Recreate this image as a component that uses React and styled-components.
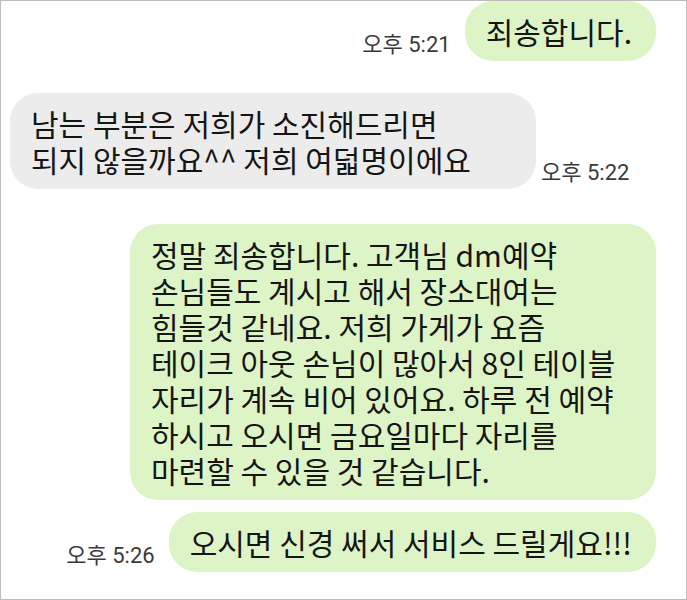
import React from "react";
import styled, { createGlobalStyle } from "styled-components";

const messages = [
  { mine: true, time: "오후 5:21", space: 0, lines: ["죄송합니다."] },
  {
    mine: false,
    time: "오후 5:22",
    space: 32,
    lines: ["남는 부분은 저희가 소진해드리면", "되지 않을까요^^ 저희 여덟명이에요"],
  },
  {
    mine: true,
    time: null,
    space: 35,
    lines: [
      "정말 죄송합니다. 고객님 dm예약",
      "손님들도 계시고 해서 장소대여는",
      "힘들것 같네요. 저희 가게가 요즘",
      "테이크 아웃 손님이 많아서 8인 테이블",
      "자리가 계속 비어 있어요. 하루 전 예약",
      "하시고 오시면 금요일마다 자리를",
      "마련할 수 있을 것 같습니다.",
    ],
  },
  { mine: true, time: "오후 5:26", space: 12, lines: ["오시면 신경 써서 서비스 드릴게요!!!"] },
];

const GlobalStyle = createGlobalStyle`
  html, body {
    margin: 0;
    padding: 0;
    background: #fff;
  }
`;

const Chat = styled.div`
  width: 687px;
  height: 600px;
  box-sizing: border-box;
  border: 1px solid #bdbdbd;
  padding: 0 30px 0 9px;
  background: #fff;
  overflow: hidden;
  display: flex;
  flex-direction: column;
  font-family: "Noto Sans CJK KR", "Noto Sans", sans-serif;
`;

const Row = styled.div`
  display: flex;
  align-items: flex-end;
  justify-content: ${(p) => (p.$mine ? "flex-end" : "flex-start")};
  gap: ${(p) => (p.$mine ? "14px" : "5px")};
  margin-top: ${(p) => p.$space}px;
`;

const Bubble = styled.div`
  box-sizing: border-box;
  width: ${(p) => (p.$multi ? "526px" : "auto")};
  padding: 12px 24px 12px 21px;
  border-radius: 28px;
  background: ${(p) => (p.$mine ? "#ddf5c6" : "#ececec")};
  color: #151515;
  font-size: 30px;
  font-weight: 400;
  line-height: 36px;
  white-space: nowrap;
`;

const Time = styled.span`
  font-family: Roboto, "Noto Sans CJK KR", sans-serif;
  font-size: 22px;
  line-height: 26px;
  color: #3a3a3a;
  margin-bottom: 3px;
  white-space: nowrap;
`;

const Message = ({ mine, time, space, lines }) => (
  <Row $mine={mine} $space={space}>
    {mine && time && <Time>{time}</Time>}
    <Bubble $mine={mine} $multi={lines.length > 1}>
      {lines.map((line, i) => (
        <React.Fragment key={i}>
          {i > 0 && <br />}
          {line}
        </React.Fragment>
      ))}
    </Bubble>
    {!mine && time && <Time>{time}</Time>}
  </Row>
);

const App = () => (
  <>
    <GlobalStyle />
    <Chat>
      {messages.map((m, i) => (
        <Message key={i} {...m} />
      ))}
    </Chat>
  </>
);

export default App;
